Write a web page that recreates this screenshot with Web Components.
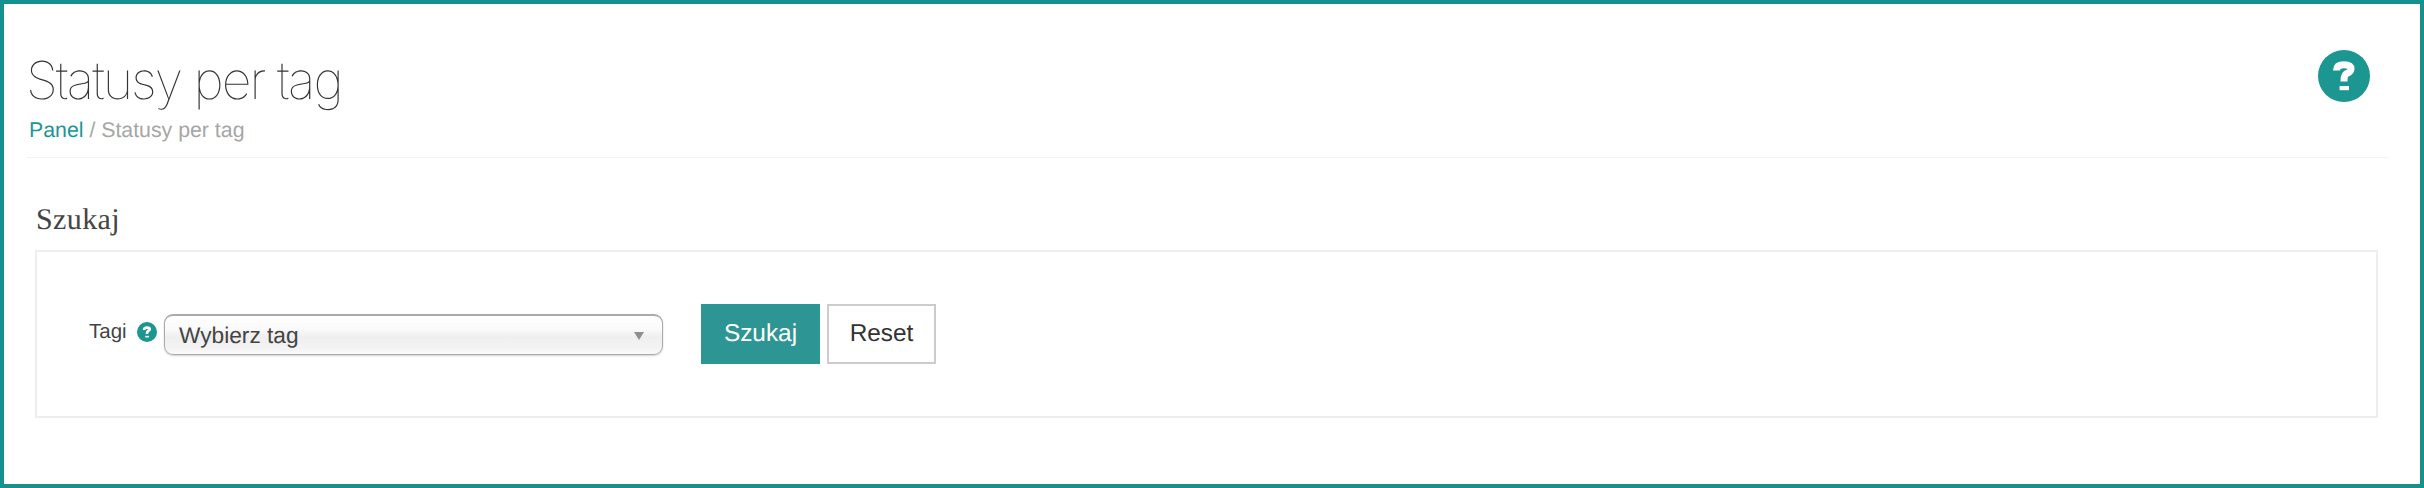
<!DOCTYPE html>
<html lang="pl">
<head>
<meta charset="utf-8">
<title>Statusy per tag</title>
<style>
    html, body { margin: 0; padding: 0; background: #fff; }
</style>
</head>
<body>
<status-page>
    <page-header heading="Statusy per tag" current="Statusy per tag"></page-header>
    <search-panel heading="Szukaj">
        <tag-filter label="Tagi" placeholder="Wybierz tag"></tag-filter>
        <app-button kind="primary">Szukaj</app-button>
        <app-button>Reset</app-button>
    </search-panel>
</status-page>

<script>
class StatusPage extends HTMLElement {
    constructor() {
        super();
        this.attachShadow({ mode: 'open' });
        this.shadowRoot.innerHTML = `
            <style>
                :host {
                    display: block;
                    box-sizing: border-box;
                    width: 2424px;
                    height: 488px;
                    border: 4px solid #14908f;
                    padding: 46px 32px 0 22px;
                    background: #fff;
                    color: #444;
                    font-family: "Liberation Sans", Arial, sans-serif;
                    text-rendering: geometricPrecision;
                }
            </style>
            <slot></slot>
        `;
    }
}

class HelpIcon extends HTMLElement {
    constructor() {
        super();
        this.attachShadow({ mode: 'open' });
        this.shadowRoot.innerHTML = `
            <style>
                :host { display: block; width: var(--size, 20px); height: var(--size, 20px); flex: none; }
                svg { display: block; width: 100%; height: 100%; }
            </style>
            <svg viewBox="0 0 52 52" aria-hidden="true">
                <circle cx="26" cy="26" r="26" fill="#1b9691"/>
                <path d="M18.5 20.5C18.5 16 22 14.8 26 14.8C30 14.8 33 16 33 19C33 22 30.4 22.6 28.4 23.8C26.6 24.9 26 26.6 26 31.5"
                      fill="none" stroke="#fff" stroke-width="7"/>
                <rect x="21.6" y="36" width="9.4" height="4.2" fill="#fff"/>
            </svg>
        `;
    }
}

class PageHeader extends HTMLElement {
    constructor() {
        super();
        this.attachShadow({ mode: 'open' });
        this.shadowRoot.innerHTML = `
            <style>
                :host {
                    display: flex;
                    justify-content: space-between;
                    align-items: flex-start;
                    height: 108px;
                    box-sizing: border-box;
                    border-bottom: 1px solid #f4f4f4;
                    --size: 52px;
                }
                h1 {
                    margin: 0;
                    font: 100 52px/62px Inter, "Liberation Sans", sans-serif;
                    letter-spacing: -2px;
                    color: #333;
                }
                nav {
                    margin: 6px 0 0 3px;
                    font-size: 21.3px;
                    line-height: 24px;
                    color: #a6a6a6;
                }
                a { color: #1b9691; text-decoration: none; }
                help-icon { margin: 0 18px 0 0; }
            </style>
            <div>
                <h1>${this.getAttribute('heading')}</h1>
                <nav><a href="#">Panel</a> / ${this.getAttribute('current')}</nav>
            </div>
            <help-icon></help-icon>
        `;
    }
}

class SearchPanel extends HTMLElement {
    constructor() {
        super();
        this.attachShadow({ mode: 'open' });
        this.shadowRoot.innerHTML = `
            <style>
                :host { display: block; padding: 0 10px 0 9px; }
                h2 {
                    margin: 0;
                    padding: 45px 0 13px 1px;
                    font: 400 30px/34px "Liberation Serif", serif;
                    letter-spacing: .4px;
                    color: #444;
                }
                .box {
                    display: flex;
                    align-items: center;
                    box-sizing: border-box;
                    height: 168px;
                    padding: 0 0 0 52px;
                    border: 2px solid #eee;
                    gap: 7px;
                }
            </style>
            <h2>${this.getAttribute('heading')}</h2>
            <div class="box"><slot></slot></div>
        `;
    }
}

class TagFilter extends HTMLElement {
    constructor() {
        super();
        this.attachShadow({ mode: 'open' });
        this.shadowRoot.innerHTML = `
            <style>
                :host {
                    display: flex;
                    align-items: center;
                    width: 574px;
                    margin-right: 31px;
                    font-size: 20.5px;
                    color: #444;
                }
                label { width: 48px; position: relative; top: -2px; }
                help-icon { margin-right: 7px; position: relative; top: -2px; }
                .select {
                    display: flex;
                    align-items: center;
                    justify-content: space-between;
                    box-sizing: border-box;
                    width: 499px;
                    height: 41px;
                    padding: 2px 18px 0 14px;
                    border: 1px solid #aaa;
                    border-top: 2px solid #aaa;
                    border-radius: 9px;
                    box-shadow: 0 1px 2px rgba(0,0,0,.18);
                    background: linear-gradient(#fff 0, #fafafa 35%, #efefef 55%, #f3f3f3 85%, #fafafa 100%);
                    font-size: 22.7px;
                    color: #444;
                }
                .arrow {
                    width: 0; height: 0;
                    border: 5px solid transparent;
                    border-top: 8px solid #8f8f8f;
                    border-bottom: 0;
                }
            </style>
            <label>${this.getAttribute('label')}</label>
            <help-icon></help-icon>
            <div class="select"><span>${this.getAttribute('placeholder')}</span><i class="arrow"></i></div>
        `;
    }
}

class AppButton extends HTMLElement {
    constructor() {
        super();
        this.attachShadow({ mode: 'open' });
        this.shadowRoot.innerHTML = `
            <style>
                :host {
                    display: flex;
                    align-items: center;
                    justify-content: center;
                    box-sizing: border-box;
                    width: 109px;
                    height: 60px;
                    border: 2px solid #ccc;
                    font-size: 24.4px;
                    color: #333;
                    background: #fff;
                }
                :host([kind="primary"]) {
                    width: 119px;
                    border: 0;
                    background: #2d9593;
                    color: #fff;
                }
            </style>
            <slot></slot>
        `;
    }
}

customElements.define('help-icon', HelpIcon);
customElements.define('page-header', PageHeader);
customElements.define('app-button', AppButton);
customElements.define('tag-filter', TagFilter);
customElements.define('search-panel', SearchPanel);
customElements.define('status-page', StatusPage);
</script>
</body>
</html>
